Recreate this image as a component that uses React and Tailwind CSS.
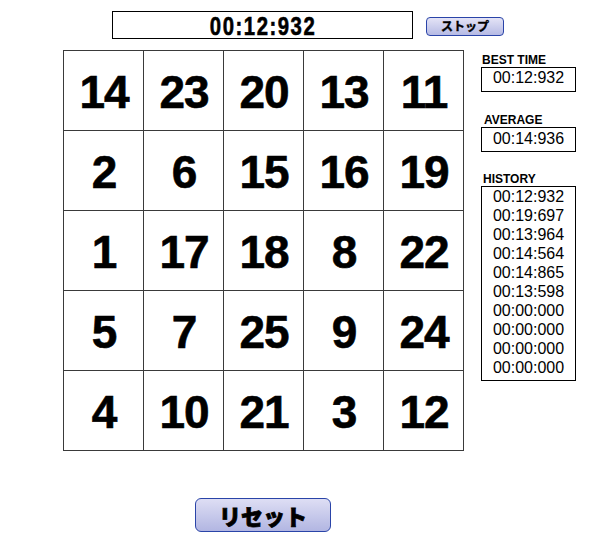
import React from 'react';

const grid = [
  [14, 23, 20, 13, 11],
  [2, 6, 15, 16, 19],
  [1, 17, 18, 8, 22],
  [5, 7, 25, 9, 24],
  [4, 10, 21, 3, 12],
];

const history = [
  '00:12:932',
  '00:19:697',
  '00:13:964',
  '00:14:564',
  '00:14:865',
  '00:13:598',
  '00:00:000',
  '00:00:000',
  '00:00:000',
  '00:00:000',
];

const sans = "font-['Liberation_Sans',Arial,sans-serif]";
const jp = "font-['Noto_Sans_CJK_JP','Liberation_Sans',sans-serif]";

export default function App() {
  return (
    <div className={`w-[597px] h-[539px] bg-white text-black ${sans}`}>
      {/* timer row */}
      <div className="flex items-center pl-[112px] pt-[11px]">
        <div className="w-[301px] h-[28px] border border-black flex items-center justify-center">
          <span className="inline-block font-bold text-[26px] leading-none tracking-[2px] scale-x-[0.78] pt-[1px] pl-[2px] [-webkit-text-stroke:0.6px_black]">
            00:12:932
          </span>
        </div>
        <button
          className={`ml-[13px] mt-[2px] w-[78px] h-[19px] rounded-[4px] border border-[#2a44a8] bg-gradient-to-b from-[#e4e4f6] to-[#b6bae4] flex items-center justify-center text-[12px] font-bold leading-none [-webkit-text-stroke:0.4px_black] ${jp}`}
        >
          ストップ
        </button>
      </div>

      {/* board + stats */}
      <div className="flex mt-[11px] pl-[63px]">
        <div className="grid grid-cols-5 border-l border-t border-[#3a3a3a] w-[401px]">
          {grid.flat().map((n, i) => (
            <div
              key={i}
              className="w-[80px] h-[80px] border-r border-b border-[#3a3a3a] flex items-center justify-center pt-[3px]"
            >
              <span className="font-bold text-[46px] leading-none tracking-[-1px] pl-[1px] [-webkit-text-stroke:0.6px_black]">{n}</span>
            </div>
          ))}
        </div>

        <div className="ml-[17px] pt-[4px] w-[95px]">
          <div className="ml-[1px] text-[12px] font-bold leading-[12px]">BEST TIME</div>
          <div className="mt-[1px] h-[25px] border border-black text-[16px] leading-[19px] text-center">
            00:12:932
          </div>

          <div className="mt-[22px] ml-[3px] text-[12px] font-bold leading-[12px]">AVERAGE</div>
          <div className="mt-[1px] h-[25px] border border-black text-[16px] leading-[19px] text-center pt-[1px]">
            00:14:936
          </div>

          <div className="mt-[21px] ml-[2px] text-[12px] font-bold leading-[12px]">HISTORY</div>
          <div className="mt-[1px] h-[195px] border border-black text-[16px] leading-[19px] text-center">
            {history.map((h, i) => (
              <div key={i}>{h}</div>
            ))}
          </div>
        </div>
      </div>

      {/* reset */}
      <div className="pl-[195px] mt-[47px]">
        <button
          className={`w-[136px] h-[34px] rounded-[6px] border border-[#2a44a8] bg-gradient-to-b from-[#dedef4] to-[#b2b6e2] flex items-center justify-center text-[22px] font-black leading-none [-webkit-text-stroke:0.8px_black] ${jp}`}
        >
          リセット
        </button>
      </div>
    </div>
  );
}
